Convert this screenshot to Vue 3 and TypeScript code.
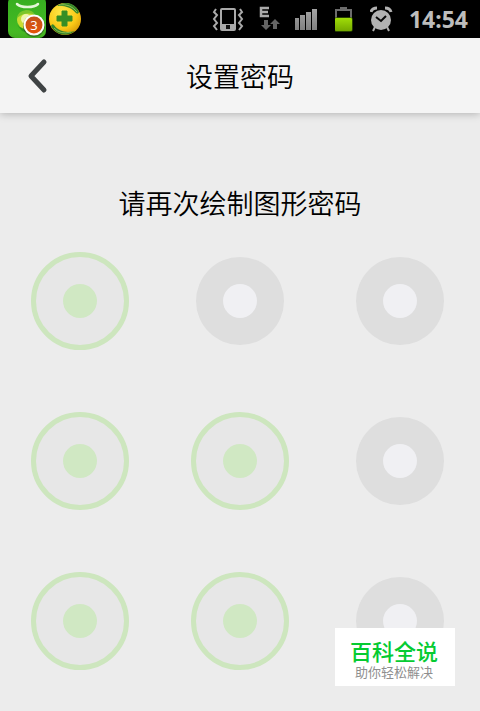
<script setup lang="ts">
import { ref } from 'vue'

const time = '14:54'
const selected = ref<Set<number>>(new Set([0, 3, 4, 6, 7]))

function toggle(index: number): void {
  const next = new Set(selected.value)
  if (!next.delete(index)) next.add(index)
  selected.value = next
}
</script>

<template>
  <div class="screen">
    <div class="status-bar">
      <div class="notifications">
        <svg class="app-icon" width="38" height="38" viewBox="0 0 38 38" aria-hidden="true">
          <defs>
            <linearGradient id="bag" x1="0" y1="0" x2="0" y2="1">
              <stop offset="0" stop-color="#35ad20" />
              <stop offset="1" stop-color="#49bd24" />
            </linearGradient>
            <linearGradient id="badge" x1="0" y1="0" x2="0" y2="1">
              <stop offset="0" stop-color="#c0531d" />
              <stop offset="1" stop-color="#e85508" />
            </linearGradient>
          </defs>
          <rect x="0" y="-4" width="38" height="42" rx="7" fill="url(#bag)" />
          <path d="M9 4q3 3 10.500 3T30 4" fill="none" stroke="#e4f6d8" stroke-width="2.500" stroke-linecap="round" />
          <circle cx="18" cy="20" r="9" fill="#c9dc32" />
          <path d="M9 18q1-7 9-8q7 0 9 5q-9-4-18 3z" fill="#7cc62a" />
          <path d="M9 25q7 7 17 3q-5 6-12 3z" fill="#2c991d" />
          <circle cx="18" cy="19" r="5" fill="#eff5ad" />
          <circle cx="26" cy="26" r="11" fill="#2b3a20" opacity=".5" />
          <circle cx="26" cy="25" r="9.500" fill="url(#badge)" stroke="#fff" stroke-width="2" />
          <text x="26" y="30" text-anchor="middle" class="badge-text">3</text>
        </svg>
        <svg width="34" height="38" viewBox="0 0 34 38" aria-hidden="true">
          <defs>
            <radialGradient id="ball" cx=".4" cy=".3" r=".75">
              <stop offset="0" stop-color="#ffe94a" />
              <stop offset=".65" stop-color="#fac816" />
              <stop offset="1" stop-color="#d69808" />
            </radialGradient>
          </defs>
          <circle cx="17" cy="19" r="16" fill="url(#ball)" />
          <path d="M9 6C16 1 27 2 31 12Q30 15 28 13C22 6 16 6 9 6z" fill="#37862b" />
          <path d="M11 5q11-2 18 7" fill="none" stroke="#8cc04d" />
          <path d="M3 26Q4 23 6 25C11 32 19 33 27 31C20 37 8 36 3 26z" fill="#37862b" />
          <path d="M6 28q6 7 17 4" fill="none" stroke="#8cc04d" />
          <path d="M14 11h5v5h5v5h-5v5h-5v-5h-5v-5h5z" fill="#368e25" stroke="#368e25" stroke-linejoin="round" />
        </svg>
      </div>

      <div class="system">
        <svg width="32" height="38" viewBox="0 0 32 38" role="img" aria-label="振动">
          <rect x="9" y="9" width="14" height="21" rx="1" fill="none" stroke="#aaa" stroke-width="2" />
          <path d="M9 24h14v6H9z" fill="#aaa" />
          <rect x="14" y="25" width="4" height="4" fill="#111" />
          <path d="M4 9l-2 3 3 3-3 4 3 4-3 3 3 4M28 9l2 3-3 3 3 4-3 4 3 3-3 4" fill="none" stroke="#aaa" stroke-width="2" />
        </svg>
        <svg width="21" height="38" viewBox="0 0 21 38" role="img" aria-label="EDGE">
          <path d="M10 8H2v8h8M2 12h7" fill="none" stroke="#aaa" stroke-width="2.500" />
          <path d="M5 20h4v5h3l-5 5-5-5h3zM14 29h4v-5h3l-5-5-5 5h3z" fill="#646464" />
        </svg>
        <svg width="25" height="38" viewBox="0 0 25 38" role="img" aria-label="信号">
          <defs>
            <linearGradient id="bars" x1="0" y1="0" x2="0" y2="1">
              <stop offset="0" stop-color="#a4a4a4" />
              <stop offset="1" stop-color="#808080" />
            </linearGradient>
          </defs>
          <path d="M-1 18h5v12h-5zM5 15h5v15H5zM11 12h5v18h-5zM17 9h5v21h-5z" fill="url(#bars)" />
        </svg>
        <svg width="20" height="38" viewBox="0 0 20 38" role="img" aria-label="电池">
          <defs>
            <linearGradient id="charge" x1="0" y1="0" x2="0" y2="1">
              <stop offset="0" stop-color="#a0dd08" />
              <stop offset="1" stop-color="#75a900" />
            </linearGradient>
          </defs>
          <path d="M1 18v-8h15v8" fill="none" stroke="#6c6c6c" stroke-width="2" />
          <path d="M5 7h7v3H5z" fill="#6c6c6c" />
          <rect x="-1" y="17" width="19" height="15" rx="3" fill="#385b00" opacity=".7" />
          <rect x="0" y="18" width="17" height="13" rx="1" fill="url(#charge)" />
        </svg>
        <svg width="24" height="38" viewBox="0 0 24 38" role="img" aria-label="闹钟">
          <circle cx="11" cy="20" r="10" fill="#b2b2b2" />
          <path d="M1 12q1-4 6-4M21 12q-1-4-6-4" fill="none" stroke="#b2b2b2" stroke-width="3" />
          <path d="M5 27l-2 4M17 27l2 4" stroke="#b2b2b2" stroke-width="2" />
          <path d="M6 17l5 4 5-5" fill="none" stroke="#080808" stroke-width="2" />
        </svg>
        <time class="clock">{{ time }}</time>
      </div>
    </div>

    <header class="header">
      <button class="back" type="button" aria-label="返回">
        <svg width="24" height="36" viewBox="0 0 24 36" aria-hidden="true">
          <path d="M18 4L5 18l13 14" fill="none" stroke="#3f4344" stroke-width="5" stroke-linecap="round" stroke-linejoin="round" />
        </svg>
      </button>
      <h1 class="title">设置密码</h1>
    </header>

    <main class="content">
      <p class="prompt">请再次绘制图形密码</p>
      <div class="pattern">
        <div v-for="(_, index) in 9" :key="index" class="cell">
          <button
            type="button"
            class="node"
            :class="{ selected: selected.has(index) }"
            :aria-label="`${index + 1}`"
            :aria-pressed="selected.has(index)"
            @click="toggle(index)"
          ></button>
        </div>
      </div>
    </main>

    <aside class="watermark">
      <strong class="brand">百科全说</strong>
      <span class="slogan">助你轻松解决</span>
    </aside>
  </div>
</template>

<style>
body {
  background: #ececec;
}
</style>

<style scoped>
.screen {
  position: relative;
  min-height: 100vh;
  background: #ececec;
  color: #000;
  font-family: "Noto Sans CJK SC", sans-serif;
}

.status-bar {
  display: flex;
  justify-content: space-between;
  height: 38px;
  padding: 0 12px 0 8px;
  background: #000;
}

.notifications {
  display: flex;
}

.badge-text {
  fill: #fff;
  font: 13px "Noto Sans", sans-serif;
}

.app-icon {
  margin-right: 2px;
}

.system {
  display: flex;
  align-items: center;
  gap: 15px;
}

.clock {
  color: #bdbdbd;
  font: bold 23px/38px "Noto Sans", sans-serif;
}

.header {
  position: relative;
  display: grid;
  grid-template-columns: 75px 1fr 75px;
  align-items: center;
  height: 75px;
  background: #f4f4f4;
  box-shadow: 0 1px 8px rgba(0, 0, 0, 0.25);
}

.back {
  display: flex;
  align-items: center;
  justify-content: center;
  height: 75px;
  padding: 0;
  border: 0;
  background: none;
}

.title {
  margin: 0;
  font-size: 27px;
  font-weight: 350;
  line-height: 40px;
  text-align: center;
}

.content {
  padding: 70px 0 10px;
}

.prompt {
  margin: 0;
  font-size: 27px;
  font-weight: 350;
  line-height: 40px;
  text-align: center;
}

.pattern {
  display: grid;
  grid-template-columns: repeat(3, 1fr);
  grid-auto-rows: 160px;
  margin-top: -2px;
}

.cell {
  display: grid;
  place-items: center;
}

.node {
  display: grid;
  place-items: center;
  box-sizing: border-box;
  width: 88px;
  height: 88px;
  padding: 0;
  border: 0 solid #cde6be;
  border-radius: 50%;
  background: #dedede;
}

.node::before {
  width: 34px;
  height: 34px;
  border-radius: 50%;
  background: #f0f0f3;
  content: "";
}

.node.selected {
  width: 98px;
  height: 98px;
  border-width: 5px;
  background: #e7e7e7;
}

.node.selected::before {
  background: #d0e8c3;
}

.watermark {
  position: absolute;
  right: 25px;
  bottom: 25px;
  display: flex;
  flex-direction: column;
  align-items: center;
  box-sizing: border-box;
  width: 120px;
  height: 58px;
  padding: 12px 2px 0 0;
  background: #fff;
  font-family: "Liberation Sans", "Noto Sans CJK SC", sans-serif;
}

.brand {
  color: #06cb32;
  font-size: 22px;
  font-weight: 500;
  line-height: 25px;
}

.slogan {
  color: #8f8f8f;
  font-size: 13px;
  line-height: 16px;
}
</style>
